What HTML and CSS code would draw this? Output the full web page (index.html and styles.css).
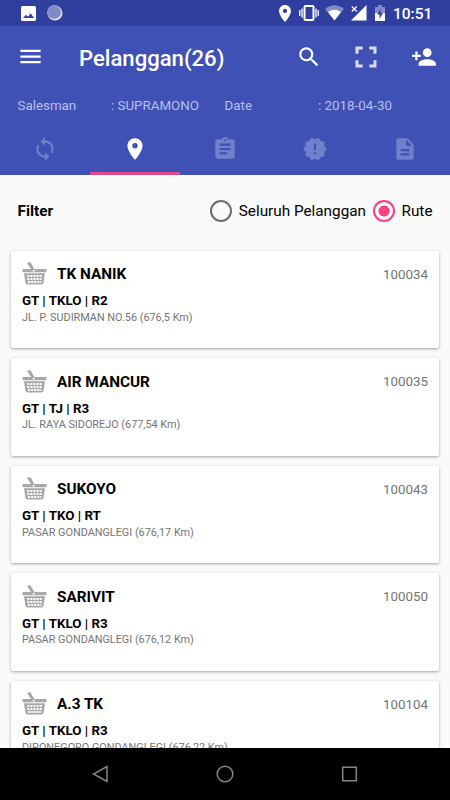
FILE: index.html
```html
<!DOCTYPE html>
<html lang="id">
<head>
  <meta charset="utf-8">
  <title>Pelanggan</title>
  <link rel="stylesheet" href="styles.css">
</head>
<body>
  <svg class="sprite">
    <symbol id="basket" viewBox="0 0 25 23">
      <path d="M0.500 7H9L5 1 8.300 0 12.300 7H24.500V10.200H.5z"/>
      <circle cx="11.700" cy="8.700" r="1" fill="#fff"/>
      <path d="M2 11.300H23L21.600 20.500Q21.300 22.600 19.200 22.600H5.800Q3.700 22.600 3.400 20.500z"/>
      <path d="M5.200 14H20M5.200 17H20M6 20H19.500" stroke="#fff" stroke-width="2" stroke-dasharray="2.100 1"/>
    </symbol>
    <symbol id="pin" viewBox="0 0 24 24">
      <path d="M12 2C8.130 2 5 5.130 5 9c0 5.250 7 13 7 13s7-7.750 7-13c0-3.870-3.130-7-7-7zm0 9.500a2.500 2.500 0 0 1 0-5 2.500 2.500 0 0 1 0 5z"/>
    </symbol>
  </svg>

  <div class="status-bar">
    <svg class="status-photo" viewBox="0 0 15 15"><path fill-rule="evenodd" d="M1.500 0h12Q15 0 15 1.500v12Q15 15 13.500 15h-12Q0 15 0 13.500v-12Q0 0 1.500 0zM2 12h11L9.700 7.200 7 10.700 5 8.700z"/></svg>
    <svg class="status-circle" viewBox="0 0 16 16"><circle cx="8" cy="8" r="7.500" fill="#e6e7f5"/><circle cx="7.200" cy="7.200" r="6.900" fill="#8289c8"/><circle cx="7.200" cy="7.200" r="6.500" fill="none" stroke="#a9aeda" stroke-dasharray="1 1"/></svg>
    <svg class="status-pin" viewBox="5 2 14 20"><use href="#pin" x="0" y="0" width="24" height="24"/></svg>
    <svg class="status-vibrate" viewBox="0 0 20 16"><rect x="5.500" y="1" width="9" height="14" rx="1" fill="none" stroke="#fff" stroke-width="2"/><path d="M.8 5v6M3 3.500v9M17 3.500v9M19.200 5v6" stroke="#fff" stroke-width="1.300"/></svg>
    <svg class="status-wifi" viewBox="0 0 19 16"><path d="M0 4Q9.500-3.500 19 4L9.500 15.500z" opacity=".4"/><path d="M3 7Q9.500 2.500 16 7L9.500 15.500z"/></svg>
    <svg class="status-signal" viewBox="0 0 16 16"><path d="M15.500 0V15.500H0L6 9.500 9 6.500z"/><path d="M.8 1.500l5 5M5.800 1.500l-5 5" stroke="#fff" stroke-width="1.200"/></svg>
    <svg class="status-battery" viewBox="0 0 10 16"><path d="M3 0h4v2h3v6H0V2h3z" opacity=".4"/><path d="M0 8h10v8H0z"/><path d="M6 3.500L2 9.500h2.500V14L8 8H5.500z" fill="#303f9f"/></svg>
    <span class="clock">10:51</span>
  </div>

  <header class="header">
    <div class="toolbar">
      <svg class="icon menu" viewBox="0 0 24 24"><path d="M3 18h18v-2H3v2zm0-5h18v-2H3v2zm0-7v2h18V6H3z"/></svg>
      <h1>Pelanggan(26)</h1>
      <svg class="icon" viewBox="0 0 24 24"><path d="M15.500 14h-.79l-.28-.27A6.471 6.471 0 0 0 16 9.500 6.500 6.500 0 1 0 9.500 16c1.610 0 3.090-.59 4.230-1.570l.27.28v.79l5 4.990L20.490 19l-4.990-5zm-6 0C7.010 14 5 11.990 5 9.500S7.010 5 9.500 5 14 7.010 14 9.500 11.990 14 9.500 14z"/></svg>
      <svg class="icon scan" viewBox="0 0 24 24"><path d="M2.300 9V2.300H9v2.800H5.100V9zM15 2.300h6.700V9h-2.800V5.100H15zM2.300 15h2.800v3.900H9v2.800H2.300zM18.900 15h2.800v6.700H15v-2.800h3.900z"/></svg>
      <svg class="icon" viewBox="0 0 24 24"><path d="M15 12c2.210 0 4-1.790 4-4s-1.790-4-4-4-4 1.790-4 4 1.790 4 4 4zm-9-2V7H4v3H1v2h3v3h2v-3h3v-2H6zm9 4c-2.670 0-8 1.340-8 4v2h16v-2c0-2.660-5.330-4-8-4z"/></svg>
    </div>
    <div class="info">
      <span>Salesman</span>
      <span>: SUPRAMONO</span>
      <span>Date</span>
      <span>: 2018-04-30</span>
    </div>
    <nav class="tabs">
      <div class="tab"><svg class="icon" viewBox="0 0 24 24"><path d="M12 4V1L8 5l4 4V6c3.310 0 6 2.690 6 6 0 1.010-.25 1.970-.7 2.800l1.460 1.460A7.930 7.930 0 0 0 20 12c0-4.420-3.580-8-8-8zm0 14c-3.310 0-6-2.690-6-6 0-1.010.25-1.970.7-2.800L5.240 7.740A7.930 7.930 0 0 0 4 12c0 4.420 3.580 8 8 8v3l4-4-4-4v3z"/></svg></div>
      <div class="tab active"><svg class="icon"><use href="#pin"/></svg></div>
      <div class="tab"><svg class="icon" viewBox="0 0 24 24"><path d="M19 3h-4.180C14.400 1.840 13.300 1 12 1c-1.300 0-2.400.84-2.820 2H5c-1.100 0-2 .9-2 2v14c0 1.100.9 2 2 2h14c1.100 0 2-.9 2-2V5c0-1.100-.9-2-2-2zm-7 0c.55 0 1 .45 1 1s-.45 1-1 1-1-.45-1-1 .45-1 1-1zm2 14H7v-2h7v2zm3-4H7v-2h10v2zm0-4H7V7h10v2z"/></svg></div>
      <div class="tab"><svg class="icon" viewBox="0 0 24 24"><path d="M23 12l-2.440-2.780.34-3.680-3.610-.82-1.890-3.180L12 3 8.600 1.540 6.710 4.720l-3.610.81.34 3.680L1 12l2.440 2.780-.34 3.690 3.610.82 1.890 3.180L12 21l3.400 1.460 1.890-3.180 3.610-.82-.34-3.680L23 12zm-10 5h-2v-2h2v2zm0-4h-2V7h2v6z"/></svg></div>
      <div class="tab"><svg class="icon" viewBox="0 0 24 24"><path d="M14 2H6c-1.100 0-1.990.9-1.990 2L4 20c0 1.100.89 2 1.990 2H18c1.100 0 2-.9 2-2V8l-6-6zm2 16H8v-2h8v2zm0-4H8v-2h8v2zm-3-5V3.500L18.500 9H13z"/></svg></div>
    </nav>
  </header>

  <main class="content">
    <div class="filter">
      <b>Filter</b>
      <span class="radio"></span>
      <span class="radio-label">Seluruh Pelanggan</span>
      <span class="radio checked"></span>
      <span class="radio-label">Rute</span>
    </div>

    <div class="card">
      <div class="card-head">
        <svg class="basket"><use href="#basket"/></svg>
        <h2>TK NANIK</h2>
        <span class="code">100034</span>
      </div>
      <div class="type">GT | TKLO | R2</div>
      <div class="address">JL. P. SUDIRMAN NO.56 (676,5 Km)</div>
    </div>
    <div class="card">
      <div class="card-head">
        <svg class="basket"><use href="#basket"/></svg>
        <h2>AIR MANCUR</h2>
        <span class="code">100035</span>
      </div>
      <div class="type">GT | TJ | R3</div>
      <div class="address">JL. RAYA SIDOREJO (677,54 Km)</div>
    </div>
    <div class="card">
      <div class="card-head">
        <svg class="basket"><use href="#basket"/></svg>
        <h2>SUKOYO</h2>
        <span class="code">100043</span>
      </div>
      <div class="type">GT | TKO | RT</div>
      <div class="address">PASAR GONDANGLEGI (676,17 Km)</div>
    </div>
    <div class="card">
      <div class="card-head">
        <svg class="basket"><use href="#basket"/></svg>
        <h2>SARIVIT</h2>
        <span class="code">100050</span>
      </div>
      <div class="type">GT | TKLO | R3</div>
      <div class="address">PASAR GONDANGLEGI (676,12 Km)</div>
    </div>
    <div class="card">
      <div class="card-head">
        <svg class="basket"><use href="#basket"/></svg>
        <h2>A.3 TK</h2>
        <span class="code">100104</span>
      </div>
      <div class="type">GT | TKLO | R3</div>
      <div class="address">DIPONEGORO GONDANGLEGI (676,22 Km)</div>
    </div>
  </main>

  <footer class="nav-bar">
    <svg viewBox="0 0 18 18"><path d="M16 1.500v15L2.500 9z"/></svg>
    <svg viewBox="0 0 18 18"><circle cx="9" cy="9" r="7.800"/></svg>
    <svg viewBox="0 0 18 18"><path d="M1.700 2.200h13.600v13.600H1.700z"/></svg>
  </footer>
</body>
</html>
```

FILE: styles.css
```css
* {
  box-sizing: border-box;
}
body {
  margin: 0;
  height: 800px;
  display: flex;
  flex-direction: column;
  overflow: hidden;
  font-family: Roboto, sans-serif;
  background-color: #fafafa;
  color: #000;
}
h1, h2 {
  margin: 0;
}
svg {
  display: block;
  flex: none;
}
.sprite {
  position: absolute;
  width: 0;
  height: 0;
}
.status-bar {
  flex: none;
  height: 26px;
  padding-left: 21px;
  display: flex;
  align-items: center;
  background-color: #303f9f;
  color: #fff;
  fill: #fff;
}
.status-photo {
  width: 15px;
  height: 15px;
}
.status-circle {
  width: 16px;
  height: 16px;
  margin-left: 11px;
}
.status-pin {
  width: 12px;
  height: 17px;
  margin-left: 216px;
}
.status-vibrate {
  width: 20px;
  height: 16px;
  margin-left: 8px;
}
.status-wifi {
  width: 19px;
  height: 16px;
  margin-left: 6px;
}
.status-signal {
  width: 16px;
  height: 16px;
  margin-left: 7px;
}
.status-battery {
  width: 10px;
  height: 16px;
  margin-left: 8px;
}
.clock {
  margin: 2px 0 0 8px;
  font-size: 15.5px;
  font-weight: 500;
}
.header {
  flex: none;
  height: 149px;
  background-color: #3f51b5;
}
.icon {
  width: 26px;
  height: 26px;
}
.toolbar {
  height: 61px;
  padding: 0 13px 0 17px;
  display: flex;
  align-items: center;
  fill: #fff;
}
.toolbar h1 {
  margin: 2px auto 0 35px;
  font-size: 22.1px;
  font-weight: 500;
  color: #fff;
}
.menu {
  width: 27px;
  height: 27px;
}
.scan {
  margin: 0 32px 0 31px;
  opacity: .8;
}
.info {
  height: 37px;
  padding: 0 17.5px;
  display: grid;
  grid-template-columns: 93.5px 113.5px 93.5px 1fr;
  align-items: center;
  font-size: 13.35px;
  color: #b8bff0;
}
.tabs {
  height: 51px;
  display: flex;
}
.tab {
  flex: 1;
  display: flex;
  justify-content: center;
  border-bottom: 3px solid transparent;
  padding-top: 12px;
  fill: #7180ca;
}
.tab.active {
  fill: #fff;
  border-color: #e0489a;
  border-color: #e8478b;
}
.content {
  flex: 1;
  min-height: 0;
  overflow: hidden;
}
.filter {
  height: 75.5px;
  padding: 0 17.5px 4px;
  display: flex;
  align-items: center;
  font-size: 15.3px;
}
.filter b {
  margin-right: auto;
}
.radio {
  width: 22px;
  height: 22px;
  border: 2px solid #6d6d6d;
  border-radius: 50%;
}
.radio-label {
  margin: 0 7px 0 6.5px;
}
.radio-label:last-child {
  margin-right: 0;
}
.radio.checked {
  border-color: #ff4081;
  background: radial-gradient(circle, #ff4081 5.2px, transparent 5.8px);
}
.card {
  height: 97.5px;
  margin: 0 11px 10px;
  padding: 11px 11px 0;
  background-color: #fff;
  border-radius: 2px;
  box-shadow: 0 1px 3px rgba(0,0,0,0.35);
}
.card-head {
  height: 24px;
  display: flex;
  align-items: center;
}
.basket {
  width: 25px;
  height: 23px;
  fill: #a8a8a8;
}
.card h2 {
  margin: 1px 0 0 10px;
  font-size: 15.3px;
  font-weight: 700;
}
.code {
  margin: 1px 0 0 auto;
  font-size: 13.35px;
  color: #757575;
}
.type {
  margin-top: 7.5px;
  font-size: 13.35px;
  line-height: 16px;
  font-weight: 700;
}
.address {
  margin-top: .6px;
  font-size: 10.85px;
  line-height: 16px;
  color: #757575;
}
.nav-bar {
  flex: none;
  height: 52px;
  padding: 0 38px;
  display: flex;
  justify-content: space-around;
  align-items: center;
  background-color: #000;
}
.nav-bar svg {
  width: 18px;
  height: 18px;
  fill: none;
  stroke: #858585;
  stroke-width: 1.5;
}
```
